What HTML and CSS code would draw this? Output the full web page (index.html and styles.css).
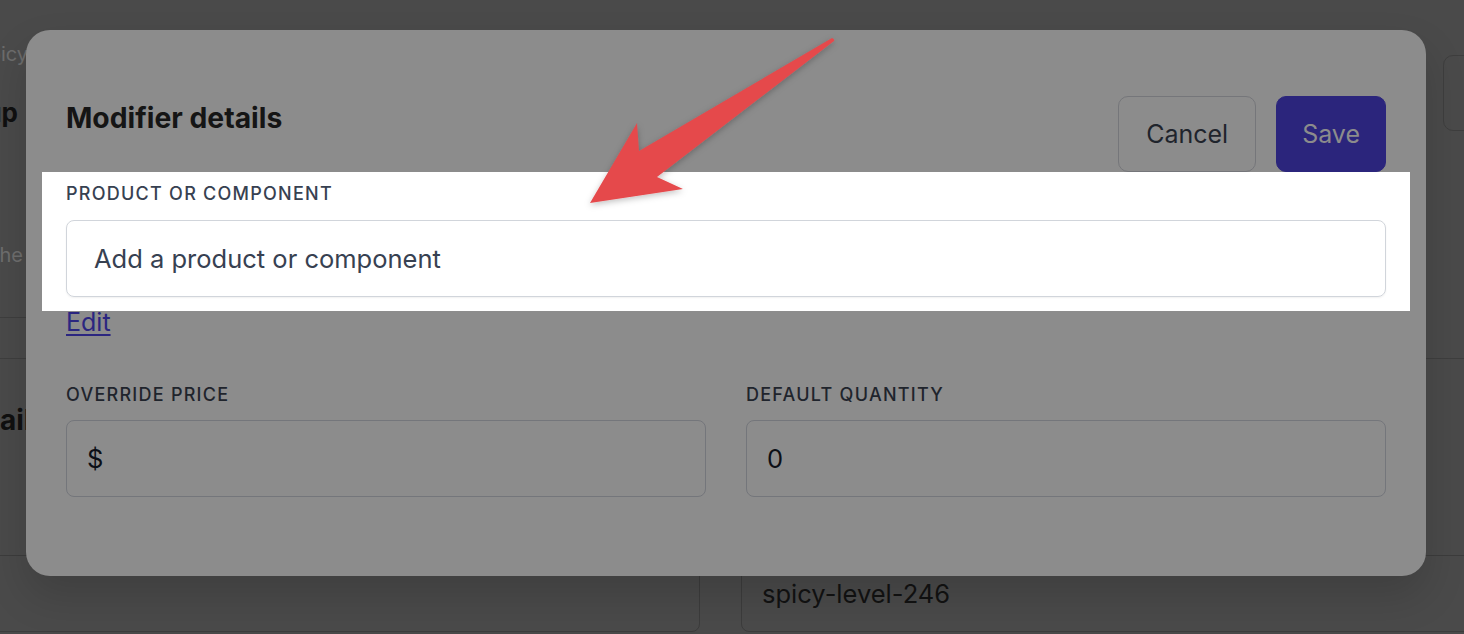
FILE: index.html
```html
<!DOCTYPE html>
<html lang="en">
<head>
<meta charset="utf-8">
<title>Modifier details</title>
<link rel="stylesheet" href="styles.css">
</head>
<body>
<div class="page">
  <div class="page-top">
    <div class="page-lead">
      <p class="crumb">Spicy</p>
      <h1 class="page-title">Modifier group</h1>
      <p class="page-desc">Choose the</p>
    </div>
    <button class="page-btn" aria-label="More"></button>
  </div>
  <div class="page-section">
    <h2 class="section-title">Details</h2>
    <div class="section-fields">
      <div class="bg-field bg-field-left"></div>
      <div class="bg-field bg-field-right">spicy-level-246</div>
    </div>
  </div>
</div>

<div class="modal">
  <div class="modal-head">
    <h2 class="modal-title">Modifier details</h2>
    <div class="modal-actions">
      <button class="btn btn-cancel">Cancel</button>
      <button class="btn btn-save">Save</button>
    </div>
  </div>
  <div class="spot">
    <label class="label">Product or component</label>
    <div class="input input-light">Add a product or component</div>
  </div>
  <div class="edit-row"><a class="edit-link" href="#">Edit</a></div>
  <div class="fields">
    <div class="field">
      <label class="label label-dim">Override price</label>
      <div class="input input-dim">$</div>
    </div>
    <div class="field">
      <label class="label label-dim">Default quantity</label>
      <div class="input input-dim">0</div>
    </div>
  </div>
</div>

<svg class="arrow" width="1464" height="634" viewBox="0 0 1464 634" aria-hidden="true">
  <defs>
    <filter id="sh" x="-20%" y="-20%" width="140%" height="140%">
      <feDropShadow dx="0" dy="2" stdDeviation="3" flood-color="#000" flood-opacity="0.25"/>
    </filter>
  </defs>
  <path filter="url(#sh)" fill="#e5494c" d="M832,38 Q835,39 834,41 L657,177 L683,189 L590,203 L637,123 L639,151 Z"/>
</svg>
</body>
</html>
```

FILE: styles.css
```css
* { box-sizing: border-box; margin: 0; padding: 0; }
html, body { width: 1464px; height: 634px; overflow: hidden; }
body {
  background: #4a4a4a;
  font-family: Inter, "Noto Sans", "Liberation Sans", sans-serif;
  position: relative;
}

/* background page (dimmed) */
.page { display: flex; flex-direction: column; }
.page-top {
  height: 359px;
  border-bottom: 1px solid #3e3e3e;
  display: flex;
  justify-content: space-between;
  align-items: flex-start;
}
.page-lead {
  width: 26px;
  height: 318px;
  border-bottom: 1px solid #3e3e3e;
  display: flex;
  flex-direction: column;
  align-items: flex-end;
}
.crumb {
  margin-top: 42px;
  margin-right: -2px;
  font-size: 20px;
  line-height: 24px;
  color: #6c6c6c;
  white-space: nowrap;
}
.page-title {
  margin-top: 31px;
  margin-right: 8px;
  font-size: 26px;
  line-height: 32px;
  font-weight: 700;
  color: #101010;
  white-space: nowrap;
}
.page-desc {
  margin-top: 114px;
  margin-right: 3px;
  font-size: 20px;
  line-height: 24px;
  color: #6e6e6e;
  white-space: nowrap;
}
.page-btn {
  margin-top: 55px;
  margin-right: -79px;
  width: 100px;
  height: 76px;
  border: 1px solid #3e3e3e;
  border-radius: 10px;
  background: transparent;
}
.page-section { padding-top: 44px; }
.section-title {
  width: 47px;
  font-size: 28px;
  line-height: 34px;
  font-weight: 700;
  color: #101010;
  display: flex;
  justify-content: flex-end;
  white-space: nowrap;
}
.section-fields {
  margin-top: 118px;
  display: grid;
  grid-template-columns: 700px 1fr;
  column-gap: 41px;
}
.bg-field {
  height: 77px;
  border: 1px solid #3c3c3c;
  border-radius: 8px;
  display: flex;
  align-items: center;
  font-size: 25.5px;
  color: #121212;
}
.bg-field-left { margin-left: -20px; }
.bg-field-right { margin-right: -20px; padding-left: 20px; }

/* modal */
.modal {
  position: absolute;
  left: 26px;
  top: 30px;
  width: 1400px;
  height: 546px;
  background: #8c8c8c;
  border-radius: 24px;
  padding: 66px 40px 0;
  box-shadow: 0 20px 40px rgba(0, 0, 0, 0.15);
}
.modal-head {
  display: flex;
  justify-content: space-between;
  align-items: flex-start;
}
.modal-title {
  margin-top: 4px;
  font-size: 28.3px;
  line-height: 36px;
  font-weight: 700;
  color: #151515;
}
.modal-actions { display: flex; gap: 20px; }
.btn {
  height: 76px;
  border-radius: 10px;
  font-family: inherit;
  font-size: 25px;
  font-weight: 400;
}
.btn-cancel {
  background: transparent;
  border: 1px solid #75767a;
  color: #1f242c;
  padding: 0 27px;
}
.btn-save {
  background: #2b257c;
  border: 1px solid #2b257c;
  color: #8c8c8c;
  padding: 0 25px;
}

.spot {
  margin: 0 -24px;
  padding: 10px 24px 14px;
  background: #fff;
}
.label {
  display: block;
  font-size: 18px;
  line-height: 24px;
  font-weight: 500;
  letter-spacing: 1.25px;
  text-transform: uppercase;
  color: #374151;
}
.label-dim { color: #1f242c; }
.input {
  margin-top: 14px;
  height: 77px;
  border-radius: 8px;
  display: flex;
  align-items: center;
  font-size: 25.5px;
}
.input-light {
  border: 1px solid #d1d5db;
  padding: 0 27px;
  color: #374151;
  box-shadow: 0 1px 2px rgba(0, 0, 0, 0.06);
}
.input-dim {
  margin-top: 13px;
  border: 1px solid #74767b;
  padding: 0 20px;
  color: #0c0f16;
}

.edit-row {
  font-size: 25px;
  line-height: 22px;
}
.edit-link {
  color: #2b2680;
  text-decoration: underline;
  text-underline-offset: 3px;
}
.fields {
  margin-top: 50px;
  display: grid;
  grid-template-columns: 1fr 1fr;
  column-gap: 40px;
}

.arrow {
  position: absolute;
  left: 0;
  top: 0;
  pointer-events: none;
}
```
